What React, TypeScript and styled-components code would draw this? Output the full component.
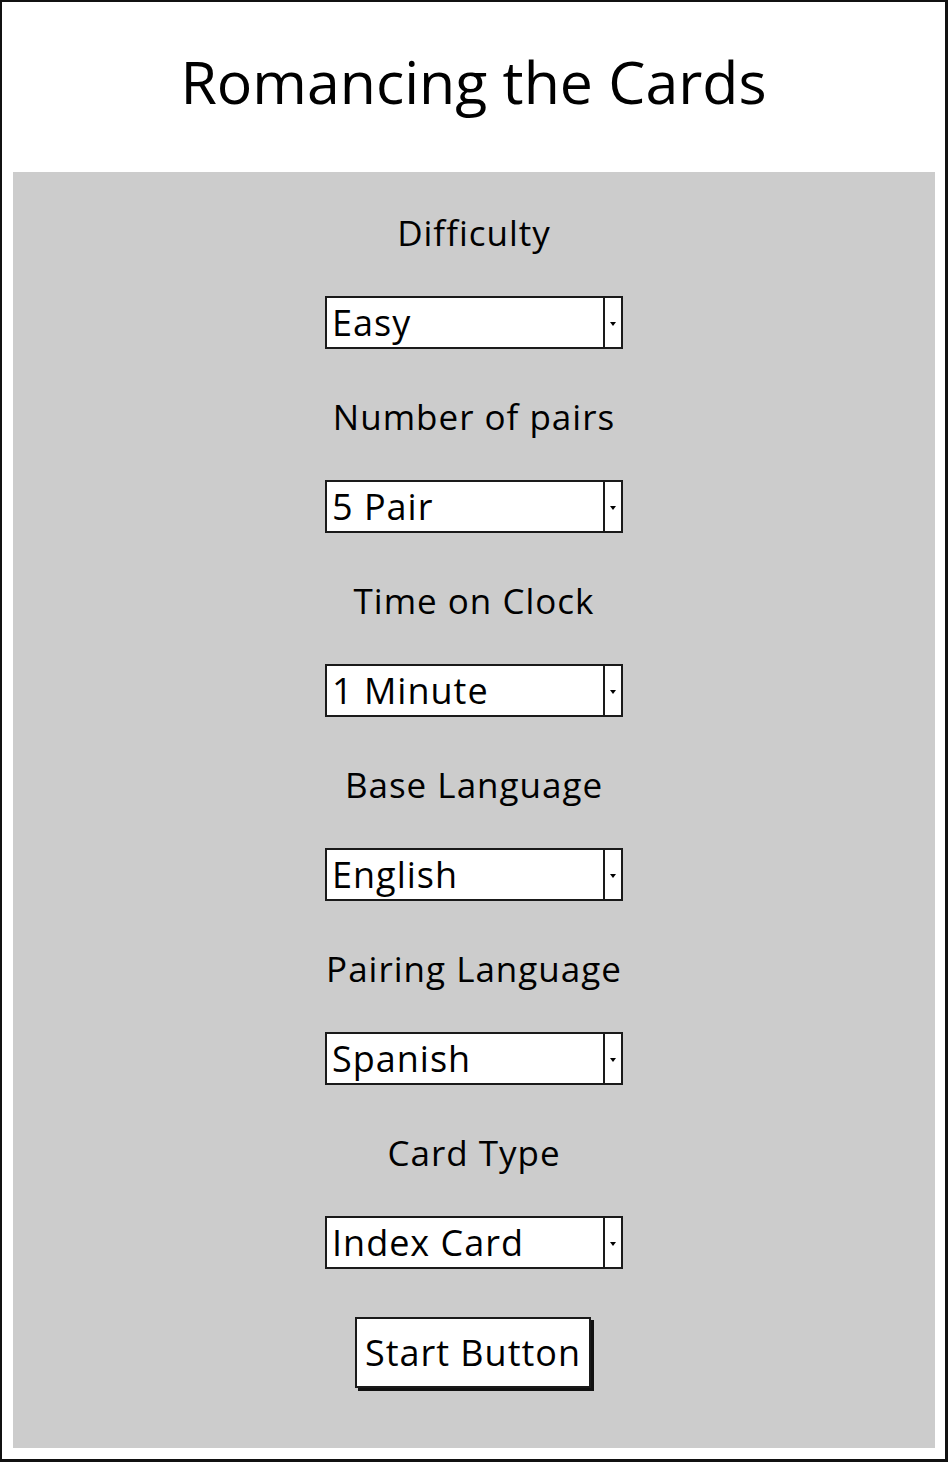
import React from "react";
import styled, { createGlobalStyle } from "styled-components";

const Global = createGlobalStyle`
  html, body { margin: 0; padding: 0; background: #ffffff; }
  body { font-family: "Open Sans", "Lato", sans-serif; color: #000; }
`;

const Frame = styled.div`
  box-sizing: border-box;
  width: 948px;
  height: 1462px;
  border: 2px solid #111;
  border-right-width: 3px;
  border-bottom-width: 3px;
  display: flex;
  flex-direction: column;
  background: #fff;
`;

const Header = styled.header`
  height: 170px;
  display: flex;
  align-items: center;
  justify-content: center;
`;

const Title = styled.h1`
  margin: 0;
  font-weight: 400;
  font-size: 59px;
  line-height: 1;
  transform: translateY(-6px);
`;

const Panel = styled.main`
  flex: 1;
  margin: 0 10px 11px 11px;
  background: #cccccc;
  display: flex;
  flex-direction: column;
  align-items: center;
  padding-top: 41px;
`;

const Group = styled.section`
  display: flex;
  flex-direction: column;
  align-items: center;
  margin-bottom: 48px;
`;

const Label = styled.div`
  font-size: 35px;
  letter-spacing: 1px;
  line-height: 40px;
  height: 40px;
  margin-bottom: 43px;
  white-space: nowrap;
`;

const SelectBox = styled.div`
  box-sizing: border-box;
  width: 298px;
  height: 53px;
  border: 2px solid #1a1a1a;
  background: #fff;
  display: flex;
  align-items: stretch;
`;

const Value = styled.div`
  flex: 1;
  display: flex;
  align-items: center;
  padding-left: 5px;
  font-size: 36px;
  letter-spacing: 1px;
  line-height: 1;
  white-space: nowrap;
  overflow: hidden;
`;

const ArrowBox = styled.div`
  width: 16px;
  border-left: 2px solid #1a1a1a;
  display: flex;
  align-items: center;
  justify-content: center;
`;

const Arrow = styled.span`
  width: 0;
  height: 0;
  border-left: 3px solid transparent;
  border-right: 3px solid transparent;
  border-top: 4px solid #000;
  margin-top: 2px;
`;

const StartButton = styled.button`
  box-sizing: border-box;
  width: 236px;
  height: 71px;
  border: 2px solid #1a1a1a;
  background: #fff;
  box-shadow: 3px 3px 0 #111;
  font-family: inherit;
  font-size: 36px;
  letter-spacing: 1px;
  color: #000;
  padding: 0;
  margin-left: -2px;
  cursor: pointer;
`;

const fields: { label: string; value: string }[] = [
  { label: "Difficulty", value: "Easy" },
  { label: "Number of pairs", value: "5 Pair" },
  { label: "Time on Clock", value: "1 Minute" },
  { label: "Base Language", value: "English" },
  { label: "Pairing Language", value: "Spanish" },
  { label: "Card Type", value: "Index Card" },
];

export default function App() {
  return (
    <>
      <Global />
      <Frame>
        <Header>
          <Title>Romancing the Cards</Title>
        </Header>
        <Panel>
          {fields.map((f) => (
            <Group key={f.label}>
              <Label>{f.label}</Label>
              <SelectBox>
                <Value>{f.value}</Value>
                <ArrowBox>
                  <Arrow />
                </ArrowBox>
              </SelectBox>
            </Group>
          ))}
          <StartButton>Start Button</StartButton>
        </Panel>
      </Frame>
    </>
  );
}
